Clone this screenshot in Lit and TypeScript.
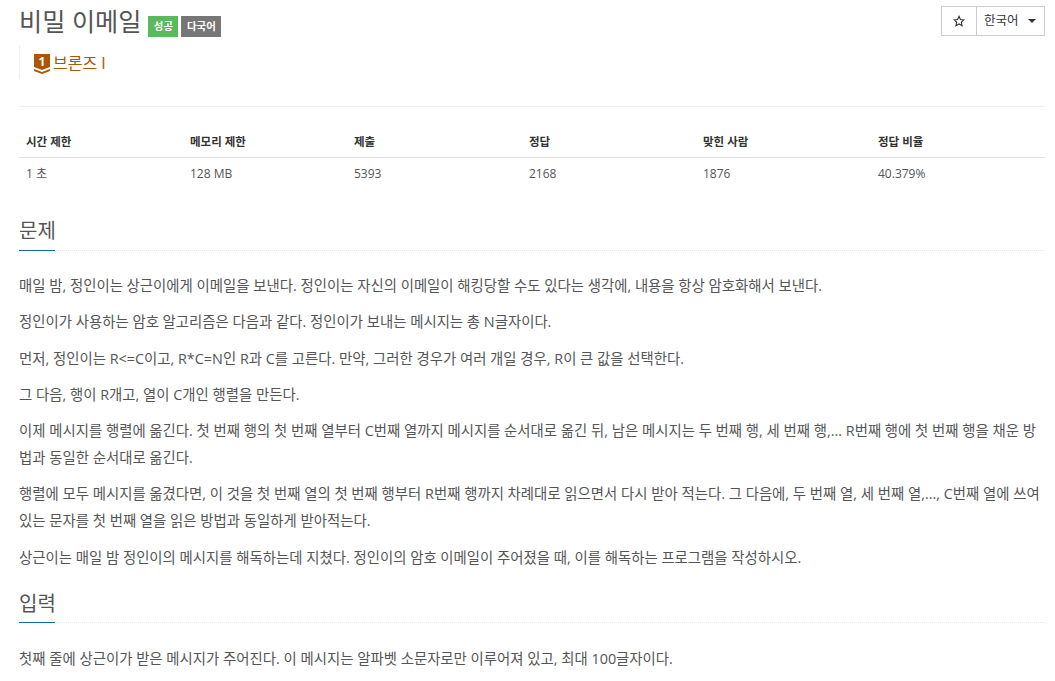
import { LitElement, html, css } from 'lit';
import { customElement } from 'lit/decorators.js';

const stats = [
  { head: '시간 제한', value: '1 초', width: 164 },
  { head: '메모리 제한', value: '128 MB', width: 164 },
  { head: '제출', value: '5393', width: 175 },
  { head: '정답', value: '2168', width: 174 },
  { head: '맞힌 사람', value: '1876', width: 175 },
  { head: '정답 비율', value: '40.379%', width: 174 },
];

const problem = [
  '매일 밤, 정인이는 상근이에게 이메일을 보낸다. 정인이는 자신의 이메일이 해킹당할 수도 있다는 생각에, 내용을 항상 암호화해서 보낸다.',
  '정인이가 사용하는 암호 알고리즘은 다음과 같다. 정인이가 보내는 메시지는 총 N글자이다.',
  '먼저, 정인이는 R<=C이고, R*C=N인 R과 C를 고른다. 만약, 그러한 경우가 여러 개일 경우, R이 큰 값을 선택한다.',
  '그 다음, 행이 R개고, 열이 C개인 행렬을 만든다.',
  '이제 메시지를 행렬에 옮긴다. 첫 번째 행의 첫 번째 열부터 C번째 열까지 메시지를 순서대로 옮긴 뒤, 남은 메시지는 두 번째 행, 세 번째 행,... R번째 행에 첫 번째 행을 채운 방법과 동일한 순서대로 옮긴다.',
  '행렬에 모두 메시지를 옮겼다면, 이 것을 첫 번째 열의 첫 번째 행부터 R번째 행까지 차례대로 읽으면서 다시 받아 적는다. 그 다음에, 두 번째 열, 세 번째 열,..., C번째 열에 쓰여있는 문자를 첫 번째 열을 읽은 방법과 동일하게 받아적는다.',
  '상근이는 매일 밤 정인이의 메시지를 해독하는데 지쳤다. 정인이의 암호 이메일이 주어졌을 때, 이를 해독하는 프로그램을 작성하시오.',
];

@customElement('app-root')
export class AppRoot extends LitElement {
  static styles = css`
    :host {
      display: block;
      height: 681px;
      overflow: hidden;
      background: #fff;
      color: #333;
      font-family: 'Open Sans', 'Noto Sans CJK KR', sans-serif;
      font-size: 14.4px;
    }

    .Page {
      padding: 0 10px 0 19px;
    }

    .Header {
      display: flex;
      justify-content: space-between;
      align-items: flex-start;
      padding-top: 6px;
    }

    .Title {
      display: flex;
      align-items: flex-start;
      color: #555;
      font-size: 25.2px;
      line-height: 30px;
      height: 40px;
    }

    .Title h1 {
      margin: 0 7px 0 0;
      font: inherit;
    }

    .Label {
      width: 30px;
      margin: 10px 3px 0 0;
      height: 21px;
      line-height: 21px;
      text-align: center;
      font-size: 10.4px;
      font-weight: 700;
      color: #fff;
      background: #5cb85c;
    }

    .Label.Gray {
      width: 40px;
      background: #777;
    }

    .Actions {
      display: flex;
      height: 28px;
      border: 1px solid #ccc;
      font-size: 12.5px;
      line-height: 28px;
    }

    .Star {
      display: flex;
      align-items: center;
      justify-content: center;
      width: 34px;
      border-right: 1px solid #ccc;
    }

    .Lang {
      display: flex;
      align-items: center;
      justify-content: space-between;
      width: 52px;
      padding: 0 8px 0 7px;
    }

    .Caret {
      width: 0;
      height: 0;
      border-top: 4px solid #333;
      border-left: 4px solid transparent;
      border-right: 4px solid transparent;
    }

    .Tier {
      display: flex;
      align-items: center;
      gap: 3px;
      height: 34px;
      margin-top: -1px;
      padding-left: 14px;
      border-left: 1px solid #eee;
      color: #ad5600;
      font-size: 16px;
    }

    .Tier svg {
      margin-top: 4px;
    }

    .Rule {
      height: 1px;
      margin-top: 27px;
      background: #eee;
    }

    .Stats {
      display: flex;
      margin-top: 21px;
    }

    .Head {
      height: 29px;
      padding-left: 7px;
      line-height: 27px;
      font-size: 11.5px;
      font-weight: 700;
      border-bottom: 1px solid #ddd;
    }

    .Value {
      height: 31px;
      padding-left: 7px;
      line-height: 31px;
      font-size: 12px;
      color: #555;
    }

    .Heading {
      position: relative;
      height: 35px;
      margin-top: 26px;
      line-height: 32px;
      font-size: 20px;
      color: #555;
      border-bottom: 1px dotted #e8e8e8;
    }

    .Heading::after {
      content: '';
      position: absolute;
      left: 0;
      bottom: -1px;
      width: 36px;
      height: 1px;
      background: #0d6aad;
    }

    .Body {
      padding-top: 21px;
    }

    .Body p {
      margin: 0 0 9.3px;
      line-height: 27px;
      color: #555;
    }

    .Body + .Heading {
      height: 34px;
      margin-top: 17px;
    }

    .Last {
      padding-top: 22px;
    }
  `;

  render() {
    return html`
      <main class="Page">
        <header class="Header">
          <div class="Title">
            <h1>비밀 이메일</h1>
            <span class="Label">성공</span>
            <span class="Label Gray">다국어</span>
          </div>
          <div class="Actions">
            <div class="Star">
              <svg width="12" height="12" viewBox="0 0 24 24" fill="none" stroke="#333" stroke-width="2.2">
                <path d="M12 2.5l2.9 6.4 6.9.8-5.1 4.7 1.4 6.9-6.1-3.5-6.1 3.5 1.4-6.9-5.1-4.7 6.9-.8z" />
              </svg>
            </div>
            <div class="Lang">한국어<span class="Caret"></span></div>
          </div>
        </header>
        <div class="Tier">
          <svg width="16" height="20" viewBox="0 0 16 20">
            <path d="M0 0h16v13l-8 3-8-3z" fill="#ad5600" />
            <path d="M0 15l8 3 8-3v2l-8 3-8-3z" fill="#ad5600" />
            <text x="8" y="12" text-anchor="middle" fill="#fff" font-size="12" font-weight="700" font-family="'Open Sans', sans-serif">1</text>
          </svg>
          <span>브론즈 I</span>
        </div>
        <div class="Rule"></div>
        <section class="Stats">
          ${stats.map(
            (s) => html`
              <div style="width:${s.width}px">
                <div class="Head">${s.head}</div>
                <div class="Value">${s.value}</div>
              </div>
            `
          )}
        </section>
        <div class="Heading">문제</div>
        <section class="Body">${problem.map((p) => html`<p>${p}</p>`)}</section>
        <div class="Heading">입력</div>
        <section class="Body Last"><p>첫째 줄에 상근이가 받은 메시지가 주어진다. 이 메시지는 알파벳 소문자로만 이루어져 있고, 최대 100글자이다.</p></section>
      </main>
    `;
  }
}
